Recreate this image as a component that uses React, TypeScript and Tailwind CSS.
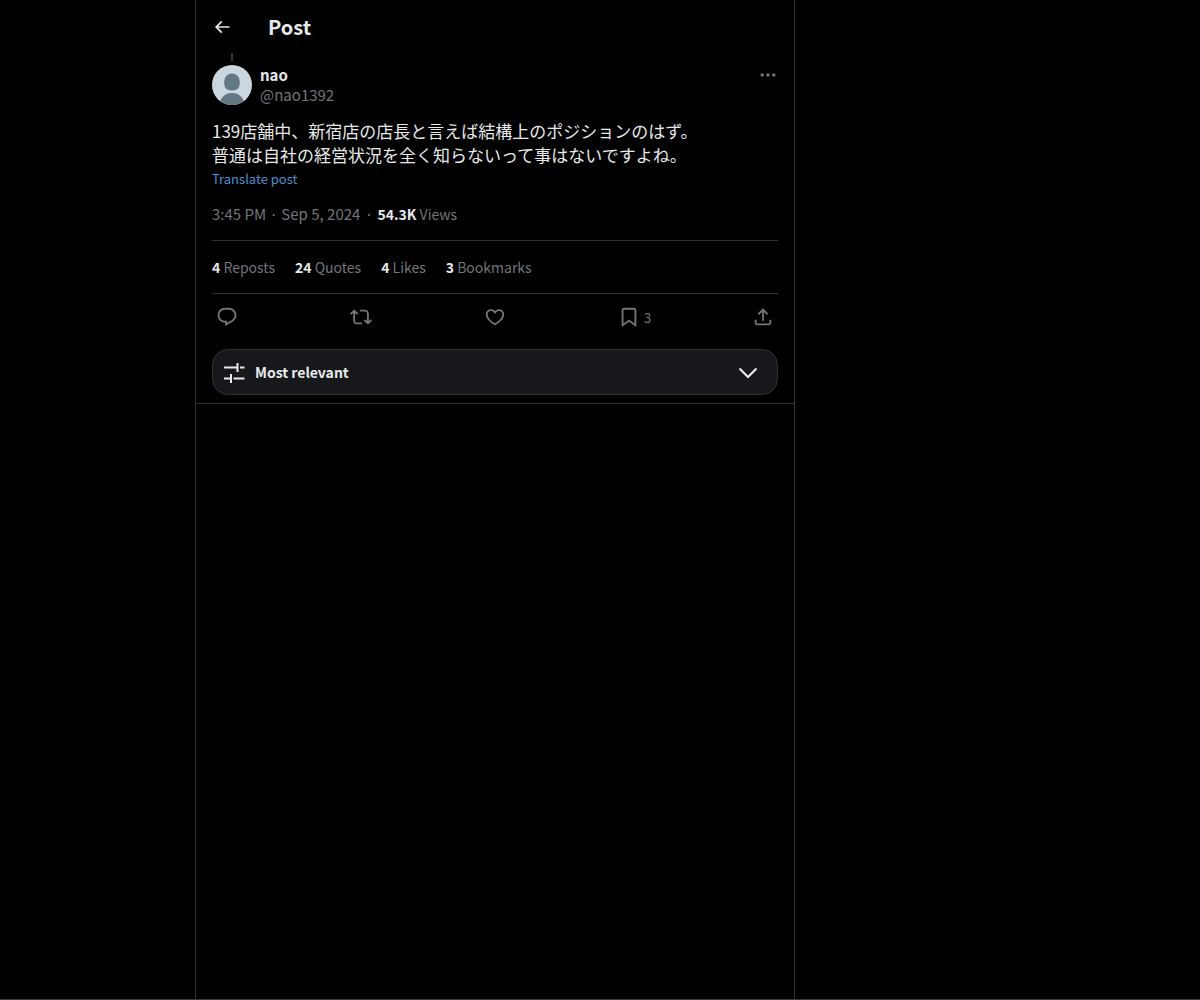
import type { ReactNode } from "react";

const stats = [
  { count: "4", label: "Reposts" },
  { count: "24", label: "Quotes" },
  { count: "4", label: "Likes" },
  { count: "3", label: "Bookmarks" },
];

const paths = {
  back: "M7.414 13l5.043 5.04-1.414 1.42L3.586 12l7.457-7.46 1.414 1.42L7.414 11H21v2H7.414z",
  more: "M3 12c0-1.1.9-2 2-2s2 .9 2 2-.9 2-2 2-2-.9-2-2zm9 2c1.1 0 2-.9 2-2s-.9-2-2-2-2 .9-2 2 .9 2 2 2zm7 0c1.1 0 2-.9 2-2s-.9-2-2-2-2 .9-2 2 .9 2 2 2z",
  reply:
    "M1.751 10c0-4.42 3.584-8 8.005-8h4.366c4.49 0 8.129 3.64 8.129 8.13 0 2.96-1.607 5.68-4.196 7.11l-8.054 4.46v-3.69h-.067c-4.49.1-8.183-3.51-8.183-8.01zm8.005-6c-3.317 0-6.005 2.69-6.005 6 0 3.37 2.77 6.08 6.138 6.01l.351-.01h1.761v2.3l5.087-2.81c1.951-1.08 3.163-3.13 3.163-5.36 0-3.39-2.744-6.13-6.129-6.13H9.756z",
  repost:
    "M4.5 3.88l4.432 4.14-1.364 1.46L5.5 7.55V16c0 1.1.896 2 2 2H13v2H7.5c-2.209 0-4-1.79-4-4V7.55L1.432 9.48.068 8.02 4.5 3.88zM16.5 6H11V4h5.5c2.209 0 4 1.79 4 4v8.45l2.068-1.93 1.364 1.46-4.432 4.14-4.432-4.14 1.364-1.46 2.068 1.93V8c0-1.1-.896-2-2-2z",
  like: "M16.697 5.5c-1.222-.06-2.679.51-3.89 2.16l-.805 1.09-.806-1.09C9.984 6.01 8.526 5.44 7.304 5.5c-1.243.07-2.349.78-2.91 1.91-.552 1.12-.633 2.78.479 4.82 1.074 1.97 3.257 4.27 7.129 6.61 3.87-2.34 6.052-4.64 7.126-6.61 1.111-2.04 1.03-3.7.477-4.82-.561-1.13-1.666-1.84-2.908-1.91zm4.187 7.69c-1.351 2.48-4.001 5.12-8.379 7.67l-.503.3-.504-.3c-4.379-2.55-7.029-5.19-8.382-7.67-1.36-2.5-1.41-4.86-.514-6.67.887-1.79 2.647-2.91 4.601-3.01 1.651-.09 3.368.56 4.798 2.01 1.429-1.45 3.146-2.1 4.796-2.01 1.954.1 3.714 1.22 4.601 3.01.896 1.81.846 4.17-.514 6.67z",
  bookmark:
    "M4 4.5C4 3.12 5.119 2 6.5 2h11C18.881 2 20 3.12 20 4.5v18.44l-8-5.71-8 5.71V4.5zM6.5 4c-.276 0-.5.22-.5.5v14.56l6-4.29 6 4.29V4.5c0-.28-.224-.5-.5-.5h-11z",
  share:
    "M12 2.59l5.7 5.7-1.41 1.42L13 6.41V16h-2V6.41l-3.3 3.3-1.41-1.42L12 2.59zM21 15l-.02 3.51c0 1.38-1.12 2.49-2.5 2.49H5.5C4.11 21 3 19.88 3 18.5V15h2v3.5c0 .28.22.5.5.5h12.98c.28 0 .5-.22.5-.5L19 15h2z",
};

function Icon({ d, className }: { d: string; className: string }) {
  return (
    <svg viewBox="0 0 24 24" fill="currentColor" aria-hidden="true" className={className}>
      <path d={d} />
    </svg>
  );
}

function Action({ label, d, children }: { label: string; d: string; children?: ReactNode }) {
  return (
    <div className="flex-1">
      <button type="button" aria-label={label} className="flex items-end gap-1 px-1">
        <Icon d={d} className="size-[22px]" />
        {children}
      </button>
    </div>
  );
}

function Avatar() {
  return (
    <svg viewBox="0 0 40 40" role="img" aria-label="nao" className="size-10 shrink-0 rounded-full">
      <rect width="40" height="40" fill="#cbd6de" />
      <path d="M20 8.500c-4.800 0-7.800 3.700-7.800 8.800 0 5.400 1.800 8.100 7.800 8.100s7.800-2.700 7.800-8.100c0-5.100-3-8.800-7.800-8.800z" fill="#647784" />
      <path d="M7 40c1.500-7.500 6-12 13-12s11.500 4.500 13 12z" fill="#647784" />
    </svg>
  );
}

export default function App() {
  return (
    <div className="flex min-h-screen flex-col border-b border-[#3a3a3a] bg-black pl-[195px] font-['Noto_Sans_CJK_JP',sans-serif] text-[15px] leading-5 text-[#e7e9ea]">
      <main className="w-full max-w-[600px] flex-1 border-x border-[#2f3336]">
        <header className="flex h-[53px] items-center gap-9 px-4">
          <button type="button" aria-label="Back">
            <Icon d={paths.back} className="size-5" />
          </button>
          <h1 className="text-xl leading-6 font-bold">Post</h1>
        </header>

        <article className="px-4">
          {/* end of the thread line from the parent post */}
          <div className="mb-1 flex h-2 w-10 justify-center">
            <div className="w-0.5 bg-[#333639]" />
          </div>

          <div className="flex gap-2">
            <Avatar />
            <div className="flex-1">
              <p className="font-bold">nao</p>
              <p className="text-[#71767b]">@nao1392</p>
            </div>
            <button type="button" aria-label="More" className="h-5 text-[#71767b]">
              <Icon d={paths.more} className="size-5" />
            </button>
          </div>

          <p lang="ja" className="mt-3.5 text-[17px] leading-6">
            139店舗中、新宿店の店長と言えば結構上のポジションのはず。
            <br />
            普通は自社の経営状況を全く知らないって事はないですよね。
          </p>
          <a href="#translate" className="block text-[13px] leading-6 text-[#4a8fd0]">
            Translate post
          </a>

          <p className="border-b border-[#2f3336] pt-[13px] pb-4 text-[#71767b]">
            <time dateTime="2024-09-05T15:45">3:45 PM · Sep 5, 2024</time>
            <span className="px-px">{" · "}</span>
            <span className="text-sm leading-5">
              <b className="text-[#e7e9ea]">54.3K</b> Views
            </span>
          </p>

          <div className="flex gap-5 border-b border-[#2f3336] py-4 text-sm leading-5">
            {stats.map((s) => (
              <a key={s.label} href={`#${s.label.toLowerCase()}`} className="text-[#71767b]">
                <b className="text-[#e7e9ea]">{s.count}</b> {s.label}
              </a>
            ))}
          </div>

          <div className="flex h-[46px] items-center text-[#71767b]">
            <Action label="Reply" d={paths.reply} />
            <Action label="Repost" d={paths.repost} />
            <Action label="Like" d={paths.like} />
            <Action label="Bookmark" d={paths.bookmark}>
              <span className="text-[13px]">3</span>
            </Action>
            <button type="button" aria-label="Share" className="px-1">
              <Icon d={paths.share} className="size-[22px]" />
            </button>
          </div>
        </article>

        <div className="border-b border-[#2f3336] px-4 pt-[9px] pb-2">
          <button
            type="button"
            className="flex h-[46px] w-full items-center gap-2 rounded-2xl border border-[#2f3336] bg-[#16181c] pr-[17px] pl-2.5 text-left text-sm leading-5 font-bold"
          >
            <svg viewBox="0 0 24 24" fill="none" stroke="currentColor" strokeWidth="2" aria-hidden="true" className="size-6">
              <path d="M1 7.500h13.500M14.500 3v9M17 7.500h4.500M1 18.500h7M8 14v9M10.500 18.500h11" />
            </svg>
            <span className="flex-1">Most relevant</span>
            <svg viewBox="0 0 24 24" fill="none" stroke="currentColor" strokeWidth="2.200" aria-hidden="true" className="size-6">
              <path d="M3.500 8.500l8.500 8.500L20.500 8.500" />
            </svg>
          </button>
        </div>
      </main>
    </div>
  );
}
